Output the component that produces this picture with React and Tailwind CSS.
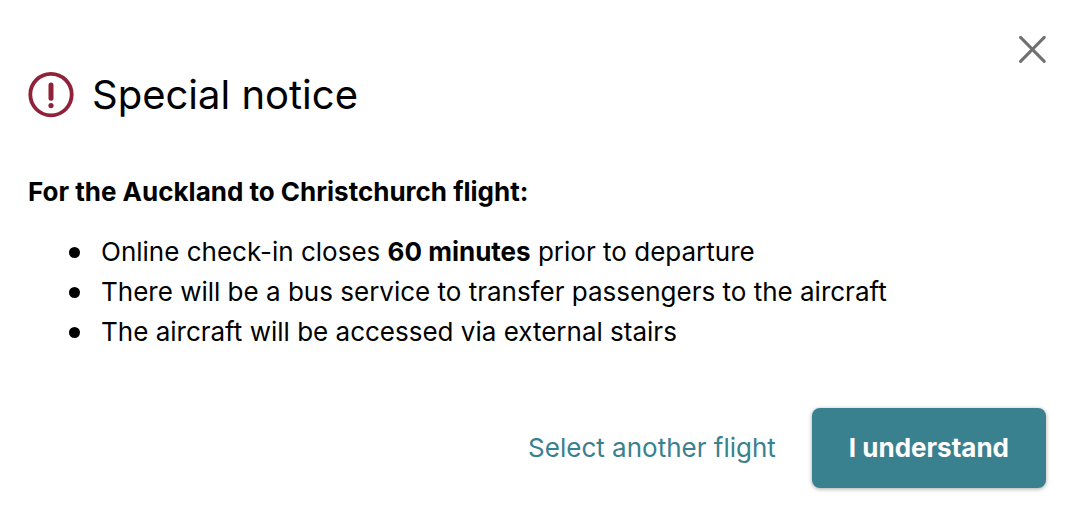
import React from 'react';

const notices = [
  <>Online check-in closes <strong className="font-bold">60 minutes</strong> prior to departure</>,
  'There will be a bus service to transfer passengers to the aircraft',
  'The aircraft will be accessed via external stairs',
];

const App = () => {
  return (
    <div
      role="dialog"
      aria-labelledby="notice-title"
      className="w-full min-h-screen bg-white text-black font-['Inter',sans-serif] pl-7 pr-[34px] py-9"
    >
      {/* Close */}
      <div className="flex justify-end h-8">
        <button type="button" aria-label="Close" className="w-7 h-7 text-[#707070] cursor-pointer">
          <svg className="w-7 h-7" viewBox="0 0 28 28" fill="none" stroke="currentColor" strokeWidth="3" strokeLinecap="round">
            <path d="M2.6 1.4l23.6 24M26.2 1.4L2.6 25.4" />
          </svg>
        </button>
      </div>

      {/* Title */}
      <div className="flex items-center gap-[18px]">
        <svg className="w-[46px] h-[46px] shrink-0 text-[#8f2138]" viewBox="0 0 46 46" fill="none" stroke="currentColor">
          <circle cx="23" cy="22.6" r="20.7" strokeWidth="3.8" />
          <path d="M23 13v13.2" strokeWidth="5" strokeLinecap="round" />
          <circle cx="23" cy="33.6" r="2.6" fill="currentColor" stroke="none" />
        </svg>
        <h1 id="notice-title" className="text-[40px] leading-[54px]">Special notice</h1>
      </div>

      <h2 className="mt-[50px] text-[26px] leading-10 font-bold">For the Auckland to Christchurch flight:</h2>

      <ul className="mt-5 pl-[41px] text-[26px] leading-10">
        {notices.map((notice, index) => (
          <li key={index} className="flex items-center gap-[21px]">
            <span className="w-[11px] h-[11px] shrink-0 rounded-full bg-black"></span>
            <span>{notice}</span>
          </li>
        ))}
      </ul>

      {/* Actions */}
      <div className="mt-14 flex justify-end items-center gap-9">
        <a href="#flights" className="text-[26px] leading-10 text-[#3a8190]">Select another flight</a>
        <button type="button" className="h-20 px-[37px] rounded-lg bg-[#3a8190] text-white text-[26px] leading-10 font-bold shadow-[0_1px_4px_rgba(0,0,0,0.35)] cursor-pointer">
          I understand
        </button>
      </div>
    </div>
  );
};

export default App;
